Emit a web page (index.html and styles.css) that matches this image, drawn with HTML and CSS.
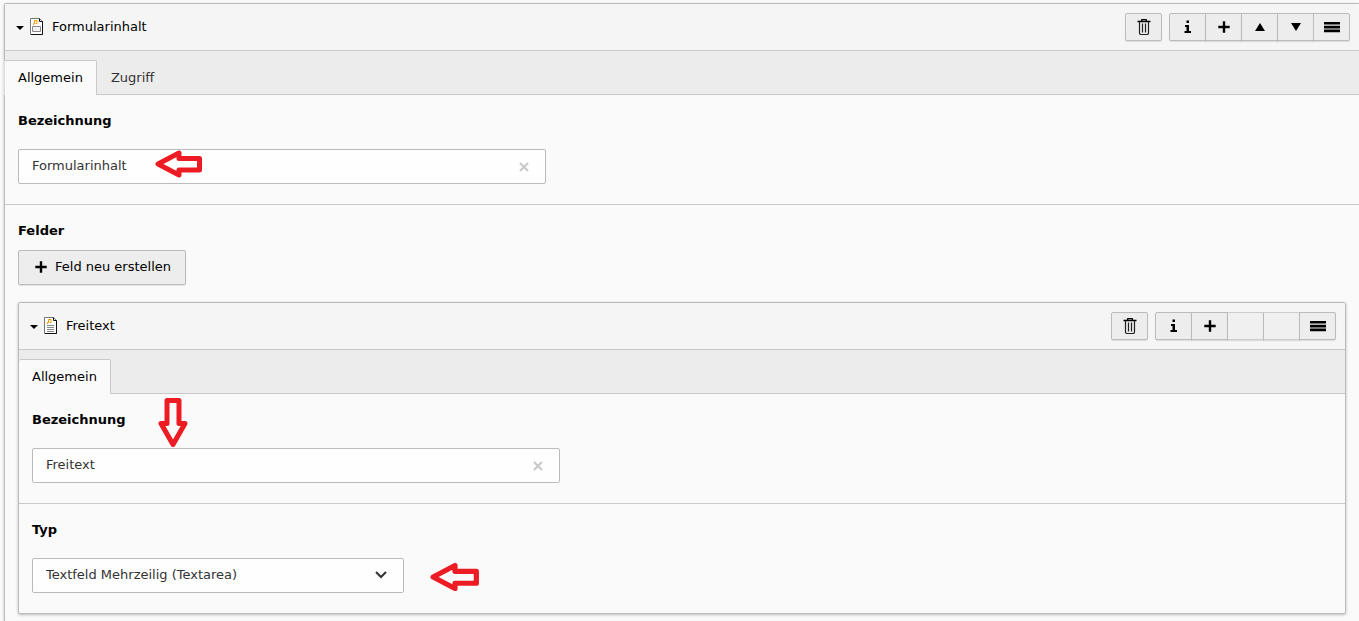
FILE: index.html
```html
<!DOCTYPE html>
<html lang="de">
<head>
    <meta charset="UTF-8">
    <meta name="viewport" content="width=device-width, initial-scale=1.0">
    <title>Formularinhalt</title>
    <link rel="stylesheet" href="styles.css">
</head>
<body>
    <svg class="sprite" aria-hidden="true">
        <symbol id="icon-trash" viewBox="0 0 16 16">
            <path d="M5.500 2V1.500Q5.500.5 6.500.5h3Q10.500.5 10.500 1.500V2M1.500 2.500h13" fill="none" stroke="#000" stroke-width="1.300"/>
            <path d="M3.500 3v11Q3.500 15.500 5 15.500h6Q12.500 15.500 12.500 14V3M6.500 4.500v9M9.500 4.500v9" fill="none" stroke="#222" stroke-width="1.200"/>
        </symbol>
        <symbol id="icon-info" viewBox="0 0 16 16">
            <path d="M6.500 1.500h2.500V4H6.500zM5 6h4v6h2v2H4.500v-2h2V8H5z"/>
        </symbol>
        <symbol id="icon-plus" viewBox="0 0 16 16">
            <path d="M6.800 2.300h2.400v4.500h4.500v2.400H9.200v4.500H6.800V9.200H2.300V6.800h4.500z"/>
        </symbol>
        <symbol id="icon-up" viewBox="0 0 16 16">
            <path d="M8 4l5 8H3z"/>
        </symbol>
        <symbol id="icon-down" viewBox="0 0 16 16">
            <path d="M8 12L3 4h10z"/>
        </symbol>
        <symbol id="icon-menu" viewBox="0 0 16 16">
            <path d="M0 3h16v2.600H0zM0 6.800h16v2.600H0zM0 10.600h16v2.600H0z"/>
        </symbol>
        <symbol id="icon-arrow" viewBox="0 0 48 28">
            <path d="M3 14L24 3v5.500h20.500v11.500H24v5z"/>
        </symbol>
    </svg>

    <section class="panel panel-outer">
        <header class="panel-heading">
            <button type="button" class="panel-toggle">
                <span class="caret"></span>
                <svg class="record-icon" viewBox="0 0 14 17">
                    <path d="M.5 16.500V.5h9l3 3v13z" fill="#fff" stroke="#777"/>
                    <path d="M9.500.5v3h3v13H1" fill="none" stroke="#111"/>
                    <path d="M3.500 7V5.500h1v-3H7V5.500H5.500" fill="none" stroke="#f49700"/>
                    <path d="M2.500 13.500v-5h8v5z" fill="#f4f4f4" stroke="#888"/>
                </svg>
                <span>Formularinhalt</span>
            </button>
            <div class="toolbar">
                <div class="btn-group">
                    <button type="button" class="btn" aria-label="Löschen"><svg><use href="#icon-trash"/></svg></button>
                </div>
                <div class="btn-group">
                    <button type="button" class="btn" aria-label="Info"><svg><use href="#icon-info"/></svg></button>
                    <button type="button" class="btn" aria-label="Neu"><svg><use href="#icon-plus"/></svg></button>
                    <button type="button" class="btn" aria-label="Nach oben"><svg><use href="#icon-up"/></svg></button>
                    <button type="button" class="btn" aria-label="Nach unten"><svg><use href="#icon-down"/></svg></button>
                    <button type="button" class="btn" aria-label="Verschieben"><svg><use href="#icon-menu"/></svg></button>
                </div>
            </div>
        </header>

        <nav class="tabs">
            <a href="#allgemein" class="tab active">Allgemein</a>
            <a href="#zugriff" class="tab">Zugriff</a>
        </nav>

        <div class="form-section" id="allgemein">
            <label for="title">Bezeichnung</label>
            <div class="input-wrap">
                <input type="text" id="title" value="Formularinhalt">
                <button type="button" class="clear" aria-label="Leeren">
                    <svg viewBox="0 0 10 10"><path d="M1 1l8 8M9 1l-8 8"/></svg>
                </button>
                <svg class="arrow arrow-title"><use href="#icon-arrow"/></svg>
            </div>
        </div>

        <div class="form-section fields-section">
            <h4>Felder</h4>
            <button type="button" class="btn btn-new"><svg><use href="#icon-plus"/></svg>Feld neu erstellen</button>

            <section class="panel panel-inner">
                <header class="panel-heading">
                    <button type="button" class="panel-toggle">
                        <span class="caret"></span>
                        <svg class="record-icon" viewBox="0 0 14 17">
                            <path d="M.5 16.500V.5h9l3 3v13z" fill="#fff" stroke="#777"/>
                            <path d="M9.500.5v3h3v13H1" fill="none" stroke="#111"/>
                            <path d="M3.500 7V5.500h1v-3H7V5.500H5.500" fill="none" stroke="#f49700"/>
                            <path d="M3 8.500h7M3 10.500h7M3 12.500h7M3 14.500h7" fill="none" stroke="#888"/>
                        </svg>
                        <span>Freitext</span>
                    </button>
                    <div class="toolbar">
                        <div class="btn-group">
                            <button type="button" class="btn" aria-label="Löschen"><svg><use href="#icon-trash"/></svg></button>
                        </div>
                        <div class="btn-group">
                            <button type="button" class="btn" aria-label="Info"><svg><use href="#icon-info"/></svg></button>
                            <button type="button" class="btn" aria-label="Neu"><svg><use href="#icon-plus"/></svg></button>
                            <button type="button" class="btn" aria-label="Nach oben" disabled></button>
                            <button type="button" class="btn" aria-label="Nach unten" disabled></button>
                            <button type="button" class="btn" aria-label="Verschieben"><svg><use href="#icon-menu"/></svg></button>
                        </div>
                    </div>
                </header>

                <nav class="tabs">
                    <a href="#freitext" class="tab active">Allgemein</a>
                </nav>

                <div class="form-section" id="freitext">
                    <label for="field-title">Bezeichnung</label>
                    <div class="input-wrap">
                        <input type="text" id="field-title" value="Freitext">
                        <button type="button" class="clear" aria-label="Leeren">
                            <svg viewBox="0 0 10 10"><path d="M1 1l8 8M9 1l-8 8"/></svg>
                        </button>
                        <svg class="arrow arrow-field" viewBox="0 0 30 50"><path d="M9 2.500h12v23h6L15 46.500 3 25.500h6z"/></svg>
                    </div>
                </div>

                <div class="form-section">
                    <label for="field-type">Typ</label>
                    <div class="input-wrap select-wrap">
                        <select id="field-type">
                            <option>Textfeld Mehrzeilig (Textarea)</option>
                        </select>
                        <svg class="chevron" viewBox="0 0 12 8"><path d="M1 1l5 5 5-5"/></svg>
                        <svg class="arrow arrow-type"><use href="#icon-arrow"/></svg>
                    </div>
                </div>
            </section>
        </div>
    </section>
</body>
</html>
```
FILE: styles.css
```css
* {
    box-sizing: border-box;
}

body {
    margin: 0;
    padding: 3px 0 0 4px;
    min-height: 100vh;
    display: flex;
    flex-direction: column;
    overflow-x: hidden;
    background: #fafafa;
    color: #000;
    font-family: Verdana, "DejaVu Sans", sans-serif;
    font-size: 13px;
    line-height: 20px;
}

button,
input,
select {
    font: inherit;
    color: inherit;
}

svg {
    display: block;
}

.sprite {
    display: none;
}

.panel {
    background: #fafafa;
    border: 1px solid #bbb;
    border-radius: 2px;
    box-shadow: 0 1px 3px rgba(0,0,0,0.25);
}

.panel-outer {
    flex: 1;
    margin-right: -1px;
    border-bottom: none;
    border-radius: 2px 2px 0 0;
}

.panel-inner {
    margin-top: 17px;
}

.panel-heading {
    display: flex;
    align-items: center;
    justify-content: space-between;
    height: 47px;
    padding: 0 9px 0 11px;
    background: #f5f5f5;
    border-bottom: 1px solid #c9c9c9;
}

.panel-toggle {
    display: flex;
    align-items: center;
    padding: 0;
    border: none;
    background: none;
    cursor: pointer;
}

.caret {
    margin-top: 2px;
    border: 4px solid transparent;
    border-top-color: #000;
    border-bottom: none;
}

.record-icon {
    width: 14px;
    height: 17px;
    margin: 0 8px 2px 6px;
}

.toolbar {
    display: flex;
    gap: 7px;
}

.btn-group {
    display: flex;
}

.btn {
    display: flex;
    align-items: center;
    justify-content: center;
    width: 37px;
    height: 28px;
    padding: 0;
    background: #ededed;
    border: 1px solid #bbb;
    border-radius: 2px;
    box-shadow: 0 1px 1px rgba(0,0,0,0.1);
    cursor: pointer;
}

.btn svg {
    width: 16px;
    height: 16px;
}

.btn-group .btn + .btn {
    margin-left: -1px;
    border-top-left-radius: 0;
    border-bottom-left-radius: 0;
}

.btn-group .btn:not(:last-child) {
    border-top-right-radius: 0;
    border-bottom-right-radius: 0;
}

.btn:disabled {
    background: #f0f0f0;
    border-color: #ccc;
    border-left-color: #bbb;
}

.btn-new {
    gap: 6px;
    width: max-content;
    height: 35px;
    padding: 0 14px 2px;
}

.tabs {
    display: flex;
    padding-top: 9px;
    background: #ececec;
    box-shadow: inset 0 -1px #c9c9c9;
}

.tab {
    height: 35px;
    padding: 7px 13px;
    border: 1px solid transparent;
    border-bottom: none;
    color: #333;
    text-decoration: none;
}

.tab.active {
    margin-left: -1px;
    background: #fafafa;
    border-color: #c9c9c9;
    border-left-color: #ddd;
    border-radius: 2px 2px 0 0;
    color: #000;
}

.panel-inner .tab.active {
    margin-left: 0;
    border-left: none;
}

.form-section {
    padding: 16px 13px 20px;
}

.form-section + .form-section {
    border-top: 1px solid #c9c9c9;
}

.fields-section {
    padding-bottom: 7px;
}

.form-section label,
.form-section h4 {
    display: block;
    margin: 0 0 18px;
    font-size: 13px;
    font-weight: bold;
}

.form-section h4 {
    margin-bottom: 9px;
}

.input-wrap {
    position: relative;
    max-width: 528px;
}

.select-wrap {
    max-width: 372px;
}

.input-wrap input,
.input-wrap select {
    display: block;
    width: 100%;
    height: 35px;
    padding: 0 32px 2px 13px;
    background: #fefefe;
    border: 1px solid #bbb;
    border-radius: 2px;
    color: #333;
    appearance: none;
}

.clear {
    position: absolute;
    top: 13px;
    right: 17px;
    padding: 0;
    border: none;
    background: none;
}

.clear svg {
    width: 10px;
    height: 10px;
    stroke: #c8c8c8;
    stroke-width: 2;
}

.chevron {
    position: absolute;
    top: 13px;
    right: 17px;
    width: 12px;
    height: 8px;
    fill: none;
    stroke: #333;
    stroke-width: 2;
    pointer-events: none;
}

/* red hint arrows on top of the form */
.arrow {
    position: absolute;
    width: 48px;
    height: 28px;
    fill: none;
    stroke: #ed1c24;
    stroke-width: 5;
    stroke-linejoin: round;
    pointer-events: none;
}

.arrow-title {
    top: 1px;
    left: 137px;
}

.arrow-field {
    top: -50px;
    left: 126px;
    width: 30px;
    height: 50px;
}

.arrow-type {
    top: 4px;
    left: 398px;
    width: 50px;
    height: 30px;
}
```
